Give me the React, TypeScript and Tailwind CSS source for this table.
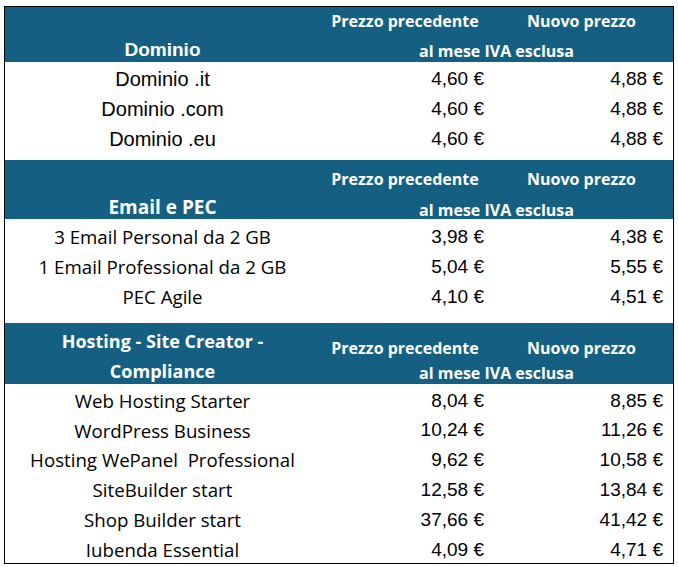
import React from "react";

const ARIAL = "font-['Liberation_Sans',Arial,sans-serif]";
const APTOS = "font-['Open_Sans',sans-serif]";

type Row = { name: string; prev: string; next: string };

type Section = {
  title: React.ReactNode;
  titleFont: string;
  titleLeading: string;
  headH: string;
  titlePt: string;
  pricePt: string;
  mergedMt: string;
  bodyH: string;
  bodyPt: string;
  rowH: string;
  nameFont: string;
  rows: Row[];
};

const sections: Section[] = [
  {
    title: "Dominio",
    titleFont: ARIAL + " text-[19px]",
    titleLeading: "leading-[20px]",
    headH: "h-[55px]",
    titlePt: "pt-[33px]",
    pricePt: "pt-[4px]",
    mergedMt: "mt-[10px]",
    bodyH: "h-[98px]",
    bodyPt: "pt-[2px]",
    rowH: "h-[30px]",
    nameFont: ARIAL + " text-[20px]",
    rows: [
      { name: "Dominio .it", prev: "4,60 €", next: "4,88 €" },
      { name: "Dominio .com", prev: "4,60 €", next: "4,88 €" },
      { name: "Dominio .eu", prev: "4,60 €", next: "4,88 €" },
    ],
  },
  {
    title: "Email e PEC",
    titleFont: APTOS + " text-[19px]",
    titleLeading: "leading-[20px]",
    headH: "h-[59px]",
    titlePt: "pt-[37px]",
    pricePt: "pt-[9px]",
    mergedMt: "mt-[11px]",
    bodyH: "h-[104px]",
    bodyPt: "pt-[3px]",
    rowH: "h-[30px]",
    nameFont: APTOS + " text-[18.7px]",
    rows: [
      { name: "3 Email Personal da 2 GB", prev: "3,98 €", next: "4,38 €" },
      { name: "1 Email Professional da 2 GB", prev: "5,04 €", next: "5,55 €" },
      { name: "PEC Agile", prev: "4,10 €", next: "4,51 €" },
    ],
  },
  {
    title: (
      <>
        Hosting - Site Creator -<br />
        Compliance
      </>
    ),
    titleFont: APTOS + " text-[18px]",
    titleLeading: "leading-[30px]",
    headH: "h-[61px]",
    titlePt: "pt-[3px]",
    pricePt: "pt-[15px]",
    mergedMt: "mt-[5px]",
    bodyH: "h-[179px]",
    bodyPt: "pt-[0px]",
    rowH: "h-[29.8px] pt-[4px]",
    nameFont: APTOS + " text-[18.7px]",
    rows: [
      { name: "Web Hosting Starter", prev: "8,04 €", next: "8,85 €" },
      { name: "WordPress Business", prev: "10,24 €", next: "11,26 €" },
      { name: "Hosting WePanel\u00a0 Professional", prev: "9,62 €", next: "10,58 €" },
      { name: "SiteBuilder start", prev: "12,58 €", next: "13,84 €" },
      { name: "Shop Builder start", prev: "37,66 €", next: "41,42 €" },
      { name: "Iubenda Essential", prev: "4,09 €", next: "4,71 €" },
    ],
  },
];

function SectionBlock({ s }: { s: Section }) {
  return (
    <div className="flex flex-col">
      <div className={`flex ${s.headH} bg-[#156082] text-white font-bold`}>
        <div className={`w-[315px] text-center ${s.titlePt} ${s.titleFont} ${s.titleLeading}`}>
          {s.title}
        </div>
        <div className={`w-[353px] flex flex-col ${s.pricePt} ${APTOS} text-[16px] leading-[20px]`}>
          <div className="flex">
            <div className="w-[170px] text-center">Prezzo precedente</div>
            <div className="w-[183px] text-center">Nuovo prezzo</div>
          </div>
          <div className={`text-center ${s.mergedMt}`}>al mese IVA esclusa</div>
        </div>
      </div>
      <div className={`flex flex-col ${s.bodyH} ${s.bodyPt} bg-white text-black`}>
        {s.rows.map((r) => (
          <div key={r.name} className={`flex items-center shrink-0 ${s.rowH}`}>
            <div className={`w-[315px] text-center whitespace-pre ${s.nameFont}`}>{r.name}</div>
            <div className={`w-[170px] text-right pr-[6px] ${ARIAL} text-[19px]`}>{r.prev}</div>
            <div className={`w-[183px] text-right pr-[10px] ${ARIAL} text-[19px]`}>{r.next}</div>
          </div>
        ))}
      </div>
    </div>
  );
}

export default function App() {
  return (
    <div className="w-[678px] h-[567px] bg-white pt-[6px] pl-[4px]">
      <div className="w-[670px] border border-black flex flex-col overflow-hidden">
        {sections.map((s, i) => (
          <SectionBlock key={i} s={s} />
        ))}
      </div>
    </div>
  );
}
